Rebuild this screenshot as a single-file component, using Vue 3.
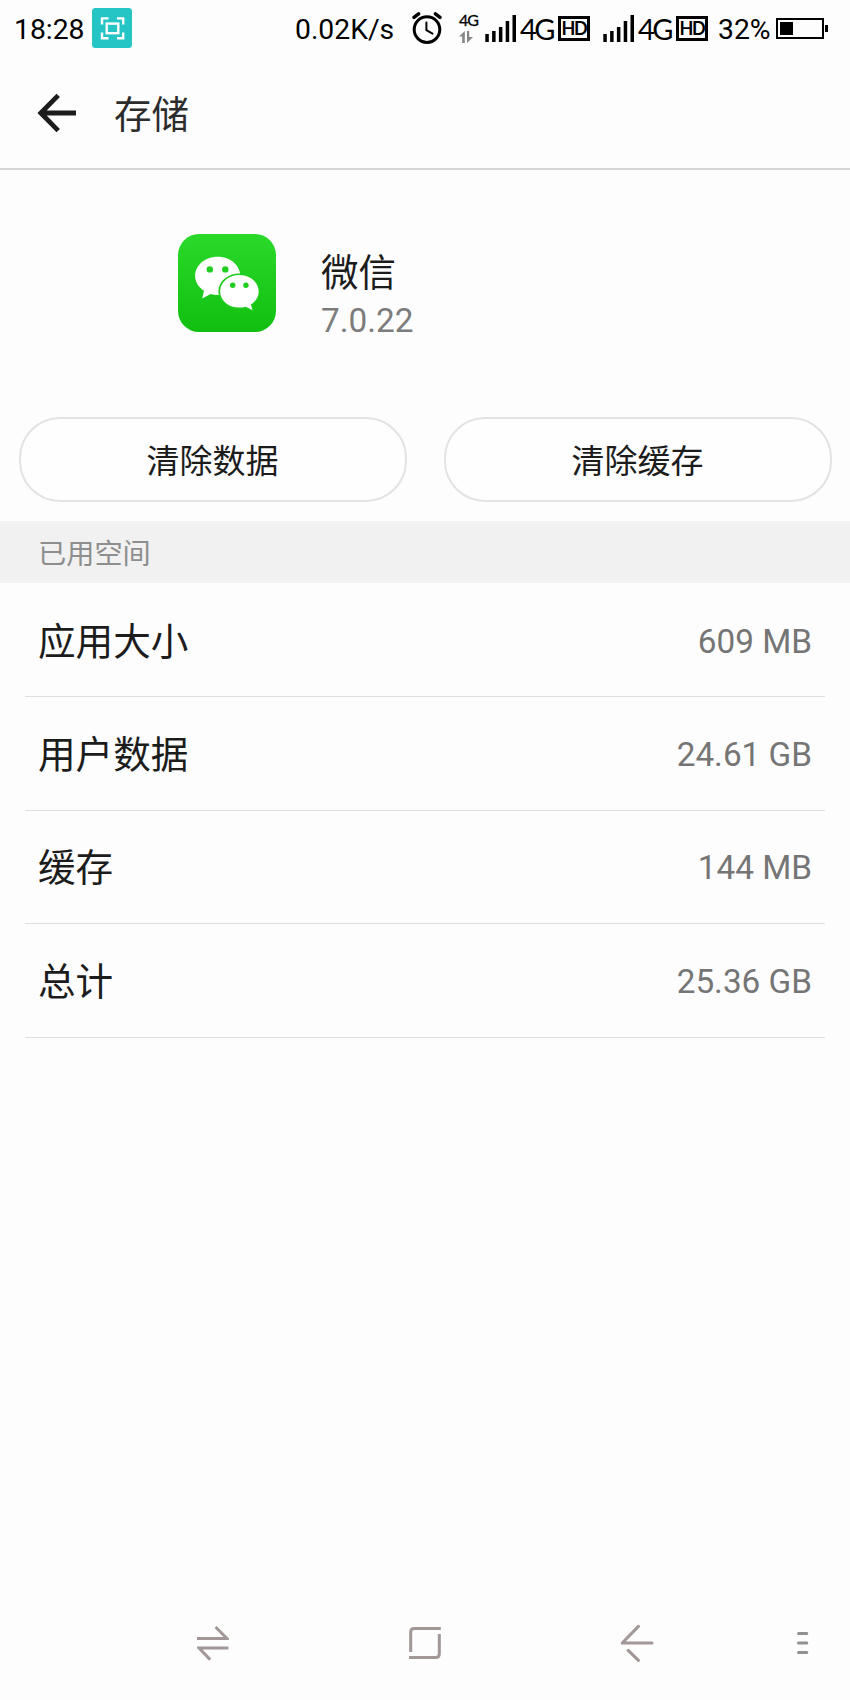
<script setup>
// 状态栏信息
const time = '18:28'
const netSpeed = '0.02K/s'
const battery = 32

// 两张 SIM 卡的信号，每格的高度
const sims = [1, 2]
const bars = [8, 11, 15, 21, 27]

const app = { name: '微信', version: '7.0.22' }

const actions = ['清除数据', '清除缓存']

const usage = [
  { label: '应用大小', value: '609 MB' },
  { label: '用户数据', value: '24.61 GB' },
  { label: '缓存', value: '144 MB' },
  { label: '总计', value: '25.36 GB' }
]
</script>

<template>
  <div class="screen">
    <!-- 状态栏 -->
    <div class="status-bar">
      <span class="time">{{ time }}</span>
      <svg class="shot-icon" width="40" height="40" viewBox="0 0 40 40">
        <rect width="40" height="40" rx="3.5" fill="#25c5c5" />
        <g fill="none" stroke="#fff" stroke-width="2.4">
          <path d="M10 16.5V10.4H16.5M25 10.4H31.2V16.5M31.2 24.5V30.3H25M16.5 30.3H10V24.5" />
          <rect x="14.7" y="15.6" width="11.6" height="9.6" />
        </g>
      </svg>
      <span class="speed">{{ netSpeed }}</span>
      <svg class="alarm-icon" width="30" height="32" viewBox="0 0 30 32">
        <g fill="none" stroke="#000" stroke-linecap="round">
          <circle cx="15" cy="17.6" r="12.8" stroke-width="3" />
          <path d="M14.4 10.5V18.2L20.5 21.6" stroke-width="2" />
          <path d="M2 5.4L6.6 1.8M23.4 1.8L28 5.4" stroke-width="3.4" />
        </g>
      </svg>
      <div class="data-type">
        <span>4G</span>
        <svg width="15" height="12" viewBox="0 0 15 12">
          <path d="M0 5.5L5.8 0V12H3.2V5.5ZM8 0H10.2V6H14L8 12Z" fill="#858585" />
        </svg>
      </div>
      <div v-for="sim in sims" :key="sim" class="sim">
        <svg width="32" height="27" viewBox="0 0 32 27">
          <rect v-for="(h, i) in bars" :key="h" :x="0.3 + i * 6.8" :y="27 - h" width="3.5" :height="h" />
        </svg>
        <span class="net">4G</span>
        <span class="hd">HD</span>
      </div>
      <span class="percent">{{ battery }}%</span>
      <div class="battery">
        <div class="battery-body">
          <div class="battery-level" :style="{ width: battery + '%' }"></div>
        </div>
        <div class="battery-tip"></div>
      </div>
    </div>

    <!-- 标题栏 -->
    <header class="header">
      <svg width="40" height="40" viewBox="0 0 40 40">
        <path d="M39 20H4M21.2 2.4L3.8 20L21.2 37.6" fill="none" stroke="#1c1c1c" stroke-width="4.8" />
      </svg>
      <h1>存储</h1>
    </header>

    <!-- 应用信息 -->
    <section class="app-info">
      <svg width="98" height="98" viewBox="0 0 98 98">
        <defs>
          <linearGradient id="green" x1="0" y1="0" x2="0" y2="1">
            <stop offset="0" stop-color="#2bd92b" />
            <stop offset="1" stop-color="#10bf10" />
          </linearGradient>
        </defs>
        <rect width="98" height="98" rx="21" fill="url(#green)" />
        <path
          d="M39.7 22.8C27.2 22.8 17.1 31.3 17.1 41.9C17.1 47.8 20.6 53.2 26 56.7L24.2 64.4L32.6 60C34.9 60.7 37.3 61 39.7 61C52.2 61 62.3 52.5 62.3 41.9C62.3 31.3 52.2 22.8 39.7 22.8Z"
          fill="#fff"
        />
        <path
          d="M61.4 41.1C50.7 41.1 42.1 48.4 42.1 57.4C42.1 66.4 50.7 73.6 61.4 73.6C63.6 73.6 65.7 73.3 67.7 72.7L74.5 76L72.9 70.4C77.7 67.4 80.7 62.7 80.7 57.4C80.7 48.4 72.1 41.1 61.4 41.1Z"
          fill="#fff"
          stroke="#1ccb1c"
          stroke-width="3.4"
          paint-order="stroke"
        />
        <g fill="#1fce1f">
          <circle cx="31.8" cy="35.4" r="3.2" />
          <circle cx="47.3" cy="35.4" r="3.2" />
          <circle cx="54.7" cy="51.2" r="2.7" />
          <circle cx="67.9" cy="51.2" r="2.7" />
        </g>
      </svg>
      <div class="app-text">
        <div class="app-name">{{ app.name }}</div>
        <div class="app-version">{{ app.version }}</div>
      </div>
    </section>

    <div class="actions">
      <button v-for="label in actions" :key="label" class="action-btn">{{ label }}</button>
    </div>

    <!-- 已用空间 -->
    <h2 class="section-title">已用空间</h2>
    <ul class="usage">
      <li v-for="row in usage" :key="row.label">
        <span class="label">{{ row.label }}</span>
        <span class="value">{{ row.value }}</span>
      </li>
    </ul>

    <!-- 底部导航键 -->
    <nav class="nav-bar">
      <svg width="32" height="36" viewBox="0 0 32 36">
        <path d="M0 13.5H30L18.6 2M31.4 23H2L13.2 34.6" fill="none" stroke="#a09796" stroke-width="3" />
      </svg>
      <svg width="32" height="34" viewBox="0 0 32 34">
        <path
          d="M1.7 26V6Q1.7 2.4 5.3 2.4H31.8M30.3 8V28Q30.3 31.5 26.7 31.5H0"
          fill="none"
          stroke="#a09796"
          stroke-width="3"
        />
      </svg>
      <svg width="34" height="38" viewBox="0 0 34 38">
        <path
          d="M32 19H2.2L18.4 2.4M8.2 26.4L18.4 36.4"
          fill="none"
          stroke="#a09796"
          stroke-width="3"
          stroke-linecap="round"
          stroke-linejoin="round"
        />
      </svg>
      <svg class="more" width="12" height="24" viewBox="0 0 12 24">
        <path d="M1.5 2.5H9.8M1.5 12H9.8M1.5 21.5H9.8" stroke="#929090" stroke-width="3" stroke-linecap="round" />
      </svg>
    </nav>
  </div>
</template>

<style>
body {
  margin: 0;
  background: #fdfdfd;
}
</style>

<style scoped>
.screen {
  display: flex;
  flex-direction: column;
  box-sizing: border-box;
  width: 850px;
  height: 1700px;
  background: #fdfdfd;
  color: #1c1c1c;
  font-family: Roboto, 'Noto Sans CJK SC', sans-serif;
}

svg {
  display: block;
  flex: none;
}

.status-bar {
  display: flex;
  align-items: center;
  height: 56px;
  padding: 0 22px 0 14px;
  color: #000;
  font-size: 28.3px;
  line-height: 33px;
  white-space: nowrap;
}

.time {
  width: 78px;
  padding-top: 2px;
}

.speed {
  width: 117px;
  margin-left: 163px;
  padding-top: 2px;
}

.alarm-icon {
  margin-right: 17px;
}

.data-type {
  display: flex;
  flex-direction: column;
  gap: 5px;
  width: 26px;
  font: 400 16px/13px Lato, sans-serif;
  letter-spacing: -1px;
  -webkit-text-stroke: 0.3px #000;
}

.sim {
  display: flex;
  align-items: center;
  width: 118px;
}

.net {
  width: 38px;
  margin-left: 3px;
  padding-top: 1px;
  font: 29px/33px Lato, sans-serif;
  letter-spacing: -2.5px;
}

.hd {
  box-sizing: border-box;
  width: 32px;
  height: 25px;
  border: 3px solid #000;
  font: bold 18px/19px Lato, sans-serif;
  letter-spacing: -1.4px;
  text-align: center;
}

.percent {
  width: 58px;
  margin-left: -3px;
  padding-top: 2px;
}

.battery {
  display: flex;
  align-items: center;
}

.battery-body {
  box-sizing: border-box;
  width: 48px;
  height: 21px;
  padding: 2px;
  border: 2px solid #000;
}

.battery-level {
  height: 100%;
  background: #000;
}

.battery-tip {
  width: 3px;
  height: 7px;
  margin-left: 1px;
  background: #000;
}

.header {
  display: flex;
  align-items: center;
  gap: 37px;
  box-sizing: border-box;
  height: 114px;
  padding: 2px 37px 0;
  border-bottom: 2px solid #d6d6d6;
}

.header h1 {
  margin: 0;
  padding-top: 3px;
  color: #2c2c2c;
  font-size: 37.5px;
  font-weight: 400;
  line-height: 54px;
}

.app-info {
  display: flex;
  gap: 45px;
  box-sizing: border-box;
  height: 247px;
  padding: 64px 0 0 178px;
}

.app-name {
  margin-top: 12px;
  font-size: 37.5px;
  line-height: 54px;
}

.app-version {
  margin-top: 1px;
  color: #7c7c7c;
  font-size: 33.3px;
  line-height: 40px;
}

.actions {
  display: grid;
  grid-template-columns: 1fr 1fr;
  gap: 37px;
  padding: 0 18.5px;
}

.action-btn {
  height: 85px;
  padding: 0 0 2px;
  border: 2px solid #e3e3e3;
  border-radius: 41px;
  background: #fefefe;
  color: #1c1c1c;
  font-family: inherit;
  font-size: 33px;
}

.section-title {
  box-sizing: border-box;
  height: 62px;
  margin: 19px 0 0;
  padding: 3px 0 0 38px;
  background: #f1f1f1;
  color: #8e8e8e;
  font-size: 28.2px;
  font-weight: 400;
  line-height: 62px;
}

.usage {
  margin: 0 25px;
  padding: 1px 0 0;
  list-style: none;
}

.usage li {
  display: flex;
  align-items: center;
  justify-content: space-between;
  box-sizing: border-box;
  height: 113.4px;
  padding: 0 13px;
  border-bottom: 1px solid #dfdfdf;
}

.label {
  padding-bottom: 4px;
  font-size: 37.6px;
}

.value {
  padding-top: 2px;
  color: #757575;
  font-size: 33.3px;
}

.nav-bar {
  display: grid;
  grid-template-columns: 212px 212px 212px 1fr;
  align-items: center;
  justify-items: center;
  height: 112px;
  margin-top: auto;
  padding: 0 0 1px 107px;
}

.more {
  margin-left: 13px;
}
</style>
